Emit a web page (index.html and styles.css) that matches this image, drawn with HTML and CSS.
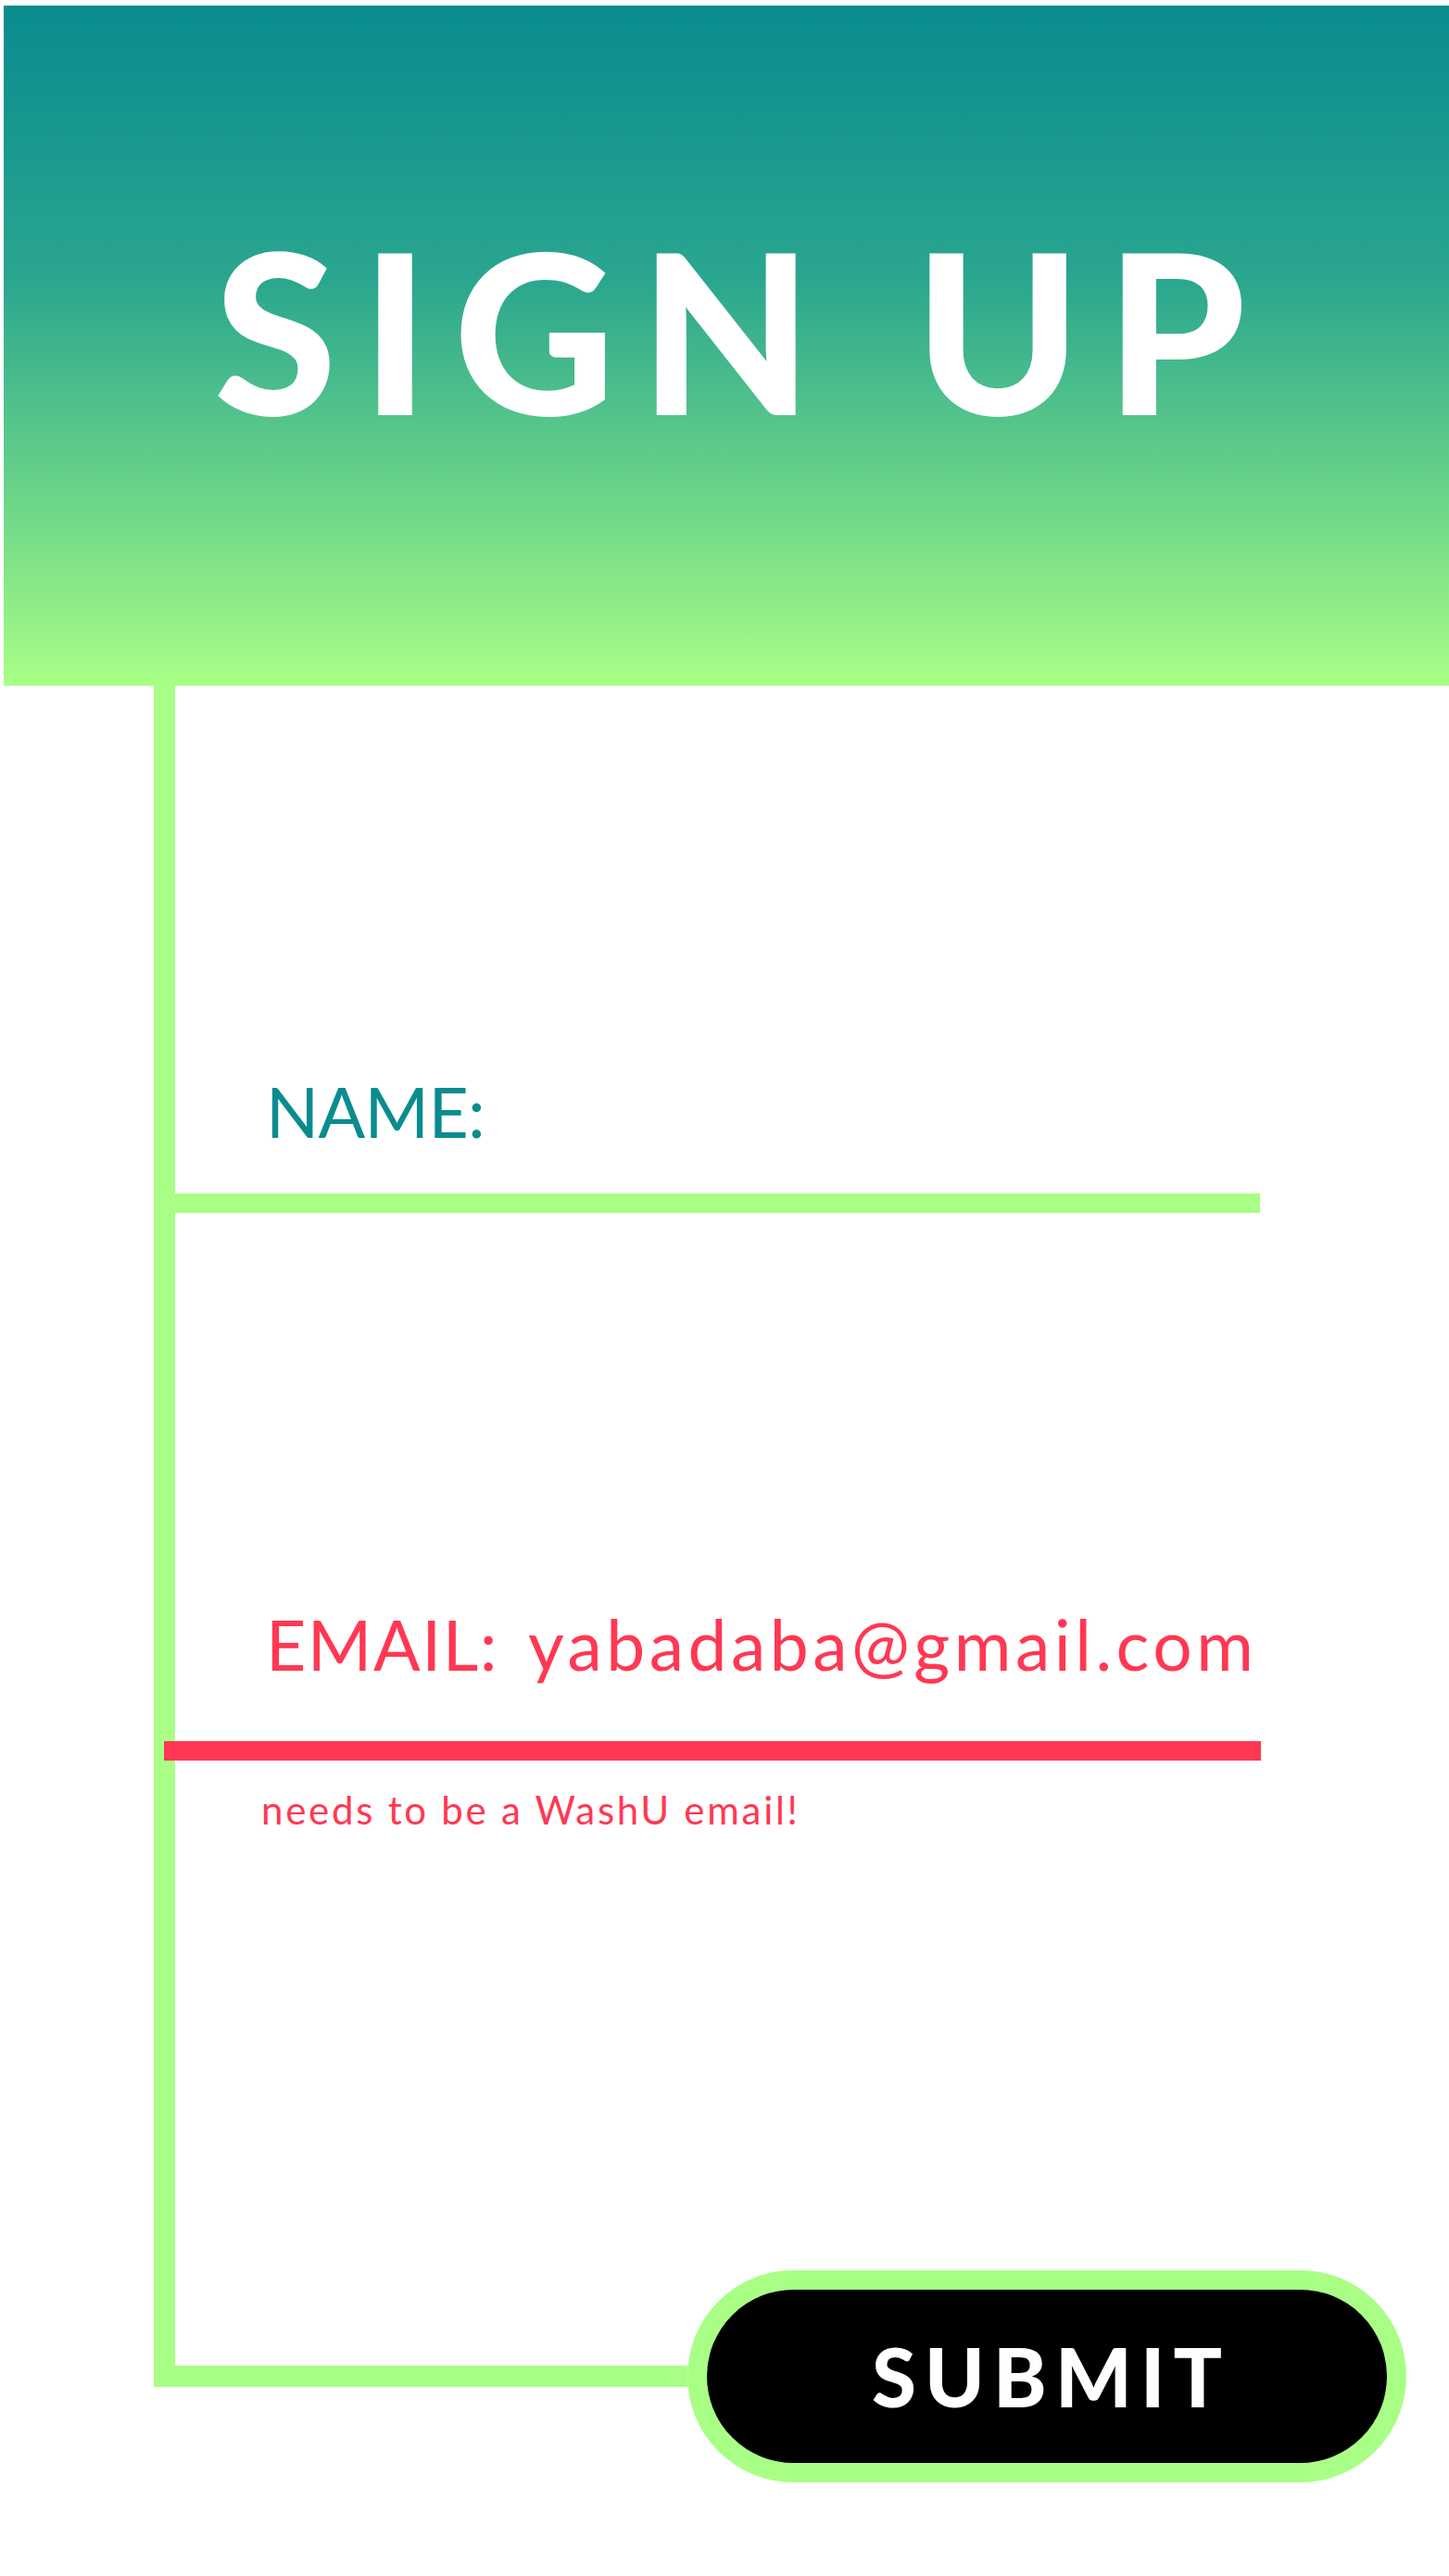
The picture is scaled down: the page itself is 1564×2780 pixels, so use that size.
FILE: index.html
```html
<!DOCTYPE html>
<html lang="en">
<head>
<meta charset="utf-8">
<title>Sign Up</title>
<link rel="stylesheet" href="styles.css">
</head>
<body>
<header class="hero">
  <h1 class="hero-title">SIGN UP</h1>
</header>
<main class="frame">
  <div class="field">
    <label class="field-label name-label">NAME:</label>
    <div class="field-line"></div>
  </div>
  <div class="field field-error">
    <div class="email-row">
      <label class="field-label email-label">EMAIL:</label>
      <span class="field-value">yabadaba@gmail.com</span>
    </div>
    <div class="field-line error-line"></div>
    <p class="helper">needs to be a WashU email!</p>
  </div>
</main>
<div class="submit-row">
  <div class="connector"></div>
  <button class="submit-btn" type="button"><span class="submit-text">SUBMIT</span></button>
</div>
</body>
</html>
```
FILE: styles.css
```css
html, body {
  margin: 0;
  padding: 0;
  background: #ffffff;
}
body {
  width: 1564px;
  overflow-x: hidden;
  font-family: "Lato", "Noto Sans", sans-serif;
}
.hero {
  margin: 6px 0 0 4px;
  height: 734px;
  box-sizing: border-box;
  padding-top: 228px;
  background: linear-gradient(180deg, #0a8b8f 0%, #2aa68f 40%, #6bd489 72%, #a9ff85 100%);
  display: flex;
  justify-content: center;
}
.hero-title {
  margin: 0;
  font-size: 241px;
  line-height: 1;
  font-weight: 900;
  color: #ffffff;
  letter-spacing: 0.11em;
  padding-left: 0.14em;
}
.frame {
  margin-left: 166px;
  border-left: 23px solid #a9ff86;
  padding: 422px 0 476px 0;
}
.field-label {
  display: block;
  font-size: 75px;
  line-height: 1;
  font-weight: 400;
  letter-spacing: 0.02em;
}
.name-label {
  color: #0a8c8f;
  margin-left: 98px;
  letter-spacing: -0.01em;
}
.field-line {
  width: 1171px;
  height: 21px;
  background: #a9ff86;
  margin-top: 51px;
}
.field-error {
  margin-top: 428px;
}
.email-row {
  display: flex;
  align-items: baseline;
  margin-left: 98px;
  color: #ff3853;
}
.email-label {
  color: #ff3853;
}
.field-value {
  font-size: 75px;
  line-height: 1;
  margin-left: 32px;
  letter-spacing: 0.06em;
}
.error-line {
  background: #ff3853;
  width: 1184px;
  margin-left: -12px;
  margin-top: 67px;
  position: relative;
}
.helper {
  margin: 32px 0 0 93px;
  font-size: 42px;
  line-height: 1;
  color: #ff3853;
  letter-spacing: 0.065em;
}
.submit-row {
  display: flex;
  align-items: flex-start;
  margin-left: 166px;
  padding-bottom: 101px;
}
.connector {
  width: 576px;
  height: 126px;
  box-sizing: border-box;
  border-left: 23px solid #a9ff86;
  border-bottom: 23px solid #a9ff86;
}
.submit-btn {
  width: 776px;
  height: 229px;
  box-sizing: border-box;
  border: 21px solid #a9ff86;
  border-radius: 120px;
  background: #000000;
  color: #ffffff;
  display: flex;
  align-items: center;
  justify-content: center;
  padding: 0;
  margin: 0;
  font-family: "Lato", "Noto Sans", sans-serif;
  cursor: pointer;
}
.submit-text {
  font-size: 87px;
  line-height: 1;
  font-weight: 900;
  letter-spacing: 0.105em;
  padding-left: 0.105em;
}
```
